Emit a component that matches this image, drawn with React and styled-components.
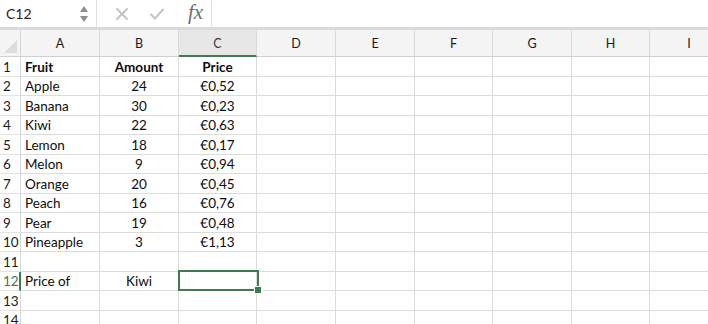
import styled, { createGlobalStyle } from "styled-components";

const GlobalStyle = createGlobalStyle`
  body {
    margin: 0;
    background: #ffffff;
    font-family: "Lato", "Liberation Sans", sans-serif;
    overflow: hidden;
  }
`;

const colWidths = [21, 79, 79, 78, 79, 79, 78, 79, 78, 79];
const rowHeights = [20, 19, 20, 19, 20, 19, 20, 19, 20, 19, 20, 19, 20, 19];
const letters = ["A", "B", "C", "D", "E", "F", "G", "H", "I"];
const GREEN = "#3f7a52";

const data = [
  ["Fruit", "Amount", "Price"],
  ["Apple", "24", "€0,52"],
  ["Banana", "30", "€0,23"],
  ["Kiwi", "22", "€0,63"],
  ["Lemon", "18", "€0,17"],
  ["Melon", "9", "€0,94"],
  ["Orange", "20", "€0,45"],
  ["Peach", "16", "€0,76"],
  ["Pear", "19", "€0,48"],
  ["Pineapple", "3", "€1,13"],
  ["", "", ""],
  ["Price of", "Kiwi", ""],
  ["", "", ""],
  ["", "", ""],
];

const Page = styled.div`
  width: 708px;
  height: 324px;
  overflow: hidden;
`;

const FormulaBar = styled.div`
  display: flex;
  align-items: stretch;
  height: 27px;
  border-bottom: 3px solid #dadada;
`;

const NameBox = styled.div`
  width: 97px;
  display: flex;
  align-items: center;
  justify-content: space-between;
  padding: 0 8px 0 6px;
  box-sizing: border-box;
  border-right: 1px solid #e0e0e0;
  font-size: 14px;
  color: #1f1f1f;
`;

const Stepper = styled.div`
  display: flex;
  flex-direction: column;
  gap: 4px;
`;

const Arrow = styled.div`
  width: 0;
  height: 0;
  border-left: 4px solid transparent;
  border-right: 4px solid transparent;
  ${(p) =>
    p.up
      ? "border-bottom: 6px solid #8e8e8e;"
      : "border-top: 6px solid #8e8e8e;"}
`;

const Actions = styled.div`
  width: 115px;
  display: flex;
  align-items: center;
  gap: 20px;
  padding-left: 18px;
  box-sizing: border-box;
  border-right: 1px solid #e0e0e0;
`;

const Fx = styled.span`
  font-family: "Liberation Serif", "DejaVu Serif", serif;
  font-style: italic;
  font-size: 21px;
  color: #6e6e6e;
  margin-left: 3px;
  margin-top: -3px;
`;

const Grid = styled.div`
  display: grid;
  grid-template-columns: ${colWidths.map((w) => w + "px").join(" ")};
  grid-template-rows: 27px ${rowHeights.map((h) => h + "px").join(" ")};
  position: relative;
`;

const Corner = styled.div`
  background: #f4f4f4;
  border-right: 1px solid #d6d6d6;
  border-bottom: 1px solid #cfcfcf;
  box-sizing: border-box;
  position: relative;
  &::after {
    content: "";
    position: absolute;
    right: 3px;
    bottom: 3px;
    width: 0;
    height: 0;
    border-left: 13px solid transparent;
    border-bottom: 13px solid #dcdcdc;
  }
`;

const ColHead = styled.div`
  background: ${(p) => (p.active ? "#e7e7e7" : "#f4f4f4")};
  border-right: 1px solid #dadada;
  border-bottom: ${(p) => (p.active ? `2px solid ${GREEN}` : "1px solid #cfcfcf")};
  box-sizing: border-box;
  display: flex;
  align-items: center;
  justify-content: center;
  font-size: 12.5px;
  color: ${(p) => (p.active ? "#3a3a3a" : "#1a1a1a")};
  padding-top: ${(p) => (p.active ? "1px" : "0")};
`;

const RowHead = styled.div`
  background: #ffffff;
  border-right: ${(p) => (p.active ? `2px solid ${GREEN}` : "1px solid #d6d6d6")};
  border-bottom: 1px solid #e2e2e2;
  box-sizing: border-box;
  display: flex;
  align-items: center;
  padding-left: 3px;
  font-size: 13.5px;
  color: ${(p) => (p.active ? GREEN : "#1a1a1a")};
`;

const Cell = styled.div`
  border-right: 1px solid #dcdcdc;
  border-bottom: 1px solid #dcdcdc;
  box-sizing: border-box;
  display: flex;
  align-items: center;
  justify-content: ${(p) => (p.center ? "center" : "flex-start")};
  padding-left: ${(p) => (p.center ? "0" : "4px")};
  font-size: 13.5px;
  font-weight: ${(p) => (p.bold ? 700 : 400)};
  color: #0d0d0d;
  white-space: nowrap;
  overflow: hidden;
`;

const Selection = styled.div`
  position: absolute;
  left: 178px;
  top: 240px;
  width: 81px;
  height: 21px;
  border: 2px solid ${GREEN};
  box-sizing: border-box;
  pointer-events: none;
  &::after {
    content: "";
    position: absolute;
    right: -5px;
    bottom: -5px;
    width: 6px;
    height: 6px;
    background: ${GREEN};
    border: 1px solid #ffffff;
  }
`;

const XIcon = () => (
  <svg width="14" height="14" viewBox="0 0 14 14">
    <path d="M2 2 L12 12 M12 2 L2 12" stroke="#c4c4c4" strokeWidth="2" strokeLinecap="round" />
  </svg>
);

const CheckIcon = () => (
  <svg width="16" height="14" viewBox="0 0 16 14">
    <path d="M2 7.5 L6 11.5 L14 2.5" stroke="#c4c4c4" strokeWidth="2" fill="none" strokeLinecap="round" strokeLinejoin="round" />
  </svg>
);

export default function App() {
  return (
    <Page>
      <GlobalStyle />
      <FormulaBar>
        <NameBox>
          C12
          <Stepper>
            <Arrow up />
            <Arrow />
          </Stepper>
        </NameBox>
        <Actions>
          <XIcon />
          <CheckIcon />
          <Fx>fx</Fx>
        </Actions>
      </FormulaBar>
      <Grid>
        <Corner />
        {letters.map((l) => (
          <ColHead key={l} active={l === "C"}>
            {l}
          </ColHead>
        ))}
        {rowHeights.map((_, r) => {
          const row = data[r] || ["", "", ""];
          return [
            <RowHead key={"h" + r} active={r === 11}>
              {r + 1}
            </RowHead>,
            ...letters.map((l, c) => (
              <Cell key={l + r} center={c === 1 || c === 2} bold={r === 0}>
                {c < 3 ? row[c] : ""}
              </Cell>
            )),
          ];
        })}
        <Selection />
      </Grid>
    </Page>
  );
}
